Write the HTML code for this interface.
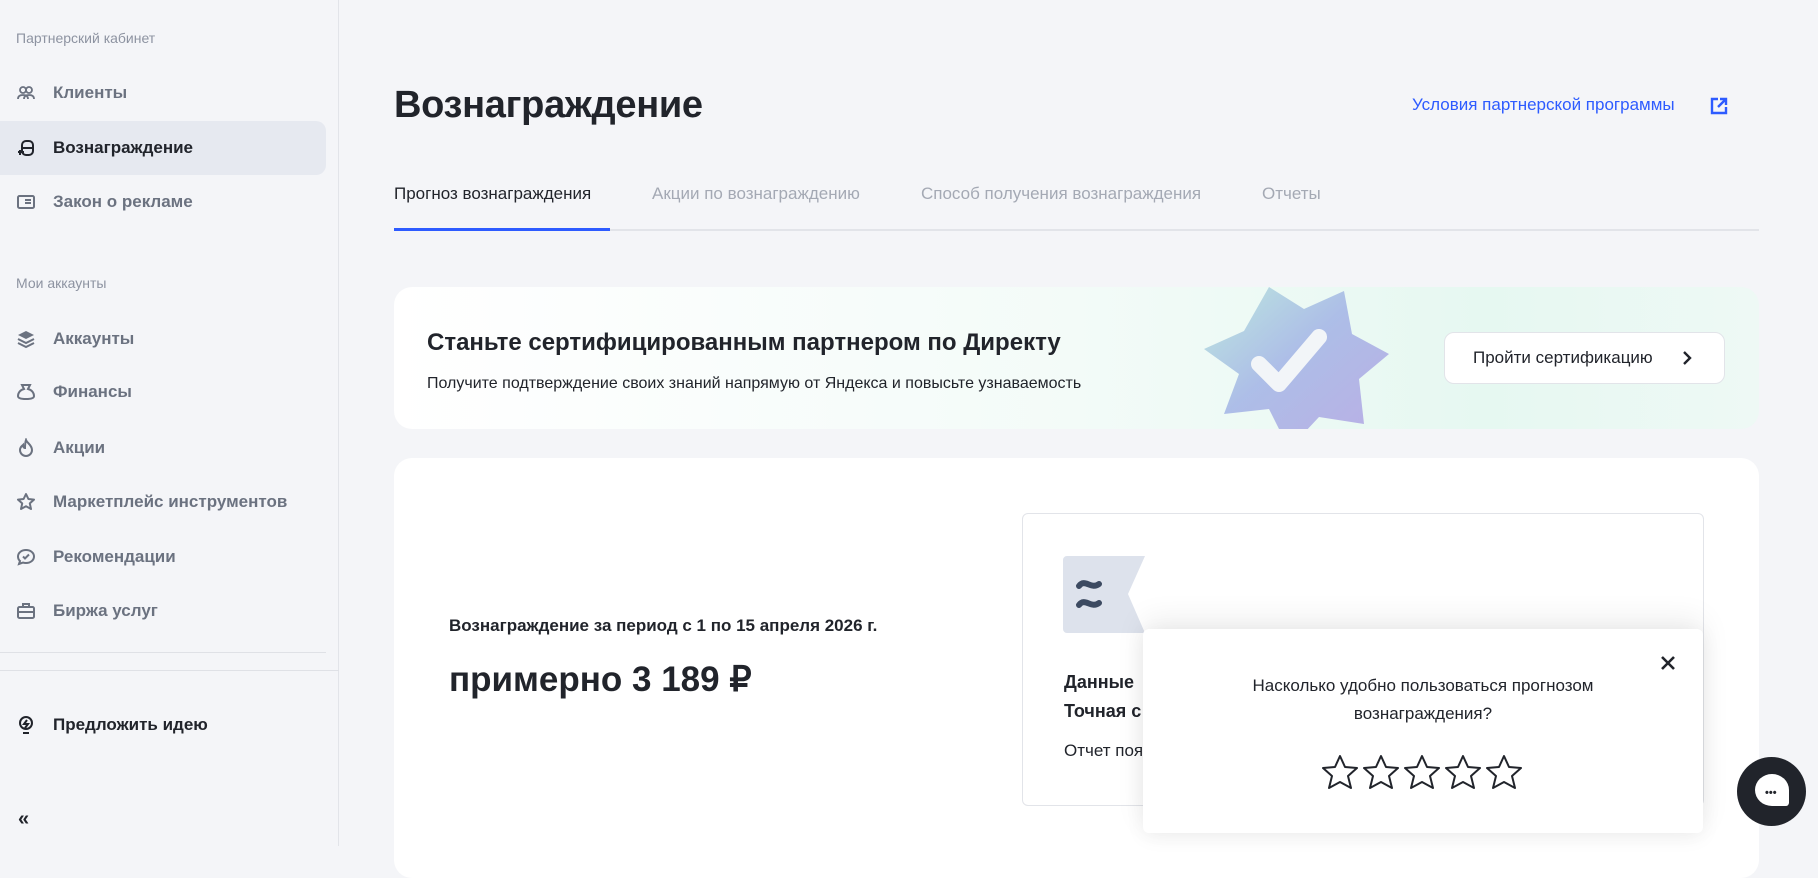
<!DOCTYPE html>
<html><head><meta charset="utf-8"><style>
*{box-sizing:border-box;margin:0;padding:0}
body{width:1818px;height:846px;overflow:hidden;background:#f4f5f8;font-family:"Liberation Sans","Noto Sans CJK SC",sans-serif;color:#21242b;position:relative}
.sb{position:absolute;left:0;top:0;width:339px;height:846px;border-right:1px solid #e2e4e9;background:#f4f5f8}
.sec{position:absolute;left:16px;font-size:14px;color:#8d93a1}
.it{position:absolute;left:0;width:326px;height:54px;display:flex;align-items:center;font-size:17px;font-weight:bold;color:#6b7280}
.it svg{position:absolute;left:16px;width:20px;height:20px}
.it span{position:absolute;left:53px}
.act{background:#e6e9f0;border-radius:0 10px 10px 0;color:#21242b}
.abs{position:absolute}
.tab{position:absolute;top:184px;font-size:17px;color:#a4a9b4}
</style></head><body>
<div class="sb">
<div class="sec" style="top:30px">Партнерский кабинет</div>
<div class="it" style="top:66px"><svg viewBox="0 0 20 20" fill="none" stroke="#6b7280" stroke-width="1.8"><circle cx="7" cy="7" r="3"/><circle cx="13" cy="7" r="3"/><path d="M2 16c0-3 2-4 5-4s5 1 5 4M8 16c0-3 2-4 5-4s5 1 5 4"/></svg><span>Клиенты</span></div>
<div class="it act" style="top:121px"><svg viewBox="0 0 20 20" fill="none" stroke="#21242b" stroke-width="2"><rect x="6" y="3" width="11" height="14" rx="4"/><path d="M6 10h11M2 14h6M4 12v5"/></svg><span>Вознаграждение</span></div>
<div class="it" style="top:175px"><svg viewBox="0 0 20 20" fill="none" stroke="#6b7280" stroke-width="2"><rect x="2" y="4" width="16" height="12" rx="1.5"/><path d="M9 8h6M9 11h6"/></svg><span>Закон о рекламе</span></div>
<div class="sec" style="top:275px">Мои аккаунты</div>
<div class="it" style="top:312px"><svg viewBox="0 0 20 20" fill="#6b7280"><path d="M10 2l8 4-8 4-8-4z"/><path d="M2 10l8 4 8-4" stroke="#6b7280" stroke-width="2" fill="none"/><path d="M2 14l8 4 8-4" stroke="#6b7280" stroke-width="2" fill="none"/></svg><span>Аккаунты</span></div>
<div class="it" style="top:365px"><svg viewBox="0 0 20 20" fill="none" stroke="#6b7280" stroke-width="2"><path d="M6 3h8l-2 4c4 1 6 4 6 7 0 2-2 3-8 3s-8-1-8-3c0-3 2-6 6-7z"/></svg><span>Финансы</span></div>
<div class="it" style="top:421px"><svg viewBox="0 0 20 20" fill="none" stroke="#6b7280" stroke-width="2"><path d="M10 2c1 3 6 5 6 10a6 6 0 0 1-12 0c0-3 2-4 3-5 0 2 1 3 2 3 0-3 0-5 1-8z"/></svg><span>Акции</span></div>
<div class="it" style="top:475px"><svg viewBox="0 0 20 20" fill="none" stroke="#6b7280" stroke-width="2" stroke-linejoin="round"><path d="M10 2l2.4 5 5.6.6-4.2 3.8 1.2 5.6L10 14.2 5 17l1.2-5.6L2 7.6 7.6 7z"/></svg><span>Маркетплейс инструментов</span></div>
<div class="it" style="top:530px"><svg viewBox="0 0 20 20" fill="none" stroke="#6b7280" stroke-width="2"><path d="M10 3c4.5 0 8 2.8 8 6.5S14.5 16 10 16c-1 0-2 0-3-.4L3 17l1-3C2.6 12.8 2 11.2 2 9.5 2 5.8 5.5 3 10 3z"/><path d="M7 9.5l2 2 4-4"/></svg><span>Рекомендации</span></div>
<div class="it" style="top:584px"><svg viewBox="0 0 20 20" fill="none" stroke="#6b7280" stroke-width="2"><rect x="2" y="6" width="16" height="11" rx="1.5"/><path d="M7 6V3h6v3M2 11h16"/></svg><span>Биржа услуг</span></div>
<div class="abs" style="left:0;top:652px;width:326px;height:1px;background:#dfe1e6"></div>
<div class="abs" style="left:0;top:670px;width:339px;height:1px;background:#dfe1e6"></div>
<div class="it" style="top:698px;color:#21242b"><svg viewBox="0 0 20 20" fill="none" stroke="#21242b" stroke-width="2"><circle cx="10" cy="8" r="6"/><path d="M11 5l-3 4h4l-3 4M7 18h6"/></svg><span>Предложить идею</span></div>
<div class="abs" style="left:18px;top:808px;font-size:20px;font-weight:bold;color:#21242b">«</div>
</div>

<div class="abs" style="left:394px;top:84px;font-size:38px;font-weight:bold;color:#21242b;letter-spacing:-0.3px">Вознаграждение</div>
<div class="abs" style="left:1412px;top:95px;font-size:17px;color:#2d5bff">Условия партнерской программы</div>
<svg class="abs" style="left:1710px;top:97px" width="18" height="18" viewBox="0 0 18 18" fill="none" stroke="#2d5bff" stroke-width="2.4"><path d="M8 2H2v14h14v-6"/><path d="M10 2h6v6M16 2L8 10"/></svg>

<div class="tab" style="left:394px;color:#21242b">Прогноз вознаграждения</div>
<div class="tab" style="left:652px">Акции по вознаграждению</div>
<div class="tab" style="left:921px">Способ получения вознаграждения</div>
<div class="tab" style="left:1262px">Отчеты</div>
<div class="abs" style="left:394px;top:229px;width:1365px;height:2px;background:#e2e4e9"></div>
<div class="abs" style="left:394px;top:228px;width:216px;height:3px;background:#2d5bff"></div>

<div class="abs" style="left:394px;top:287px;width:1365px;height:142px;border-radius:18px;background:linear-gradient(90deg,#ffffff 0%,#f3fbf8 50%,#e6f8f1 80%,#eef9f5 100%);overflow:hidden">
<div class="abs" style="left:33px;top:42px;font-size:24px;font-weight:bold;color:#21242b">Станьте сертифицированным партнером по Директу</div>
<div class="abs" style="left:33px;top:88px;font-size:16px;color:#21242b">Получите подтверждение своих знаний напрямую от Яндекса и повысьте узнаваемость</div>
<svg class="abs" style="left:800px;top:-8px" width="200" height="160" viewBox="0 0 200 160"><defs><linearGradient id="g" x1="0" y1="0" x2="1" y2="1"><stop offset="0" stop-color="#b7e6dc"/><stop offset=".45" stop-color="#a6b7e6"/><stop offset="1" stop-color="#b6a5e3"/></linearGradient></defs><path d="M75 8 L110 30 L150 12 L158 55 L195 75 L165 100 L170 145 L125 138 L95 170 L75 130 L30 135 L45 95 L10 70 L50 52 Z" fill="url(#g)" opacity=".9"/><path d="M65 85 L85 105 L125 58" fill="none" stroke="#f2f5f8" stroke-width="16" stroke-linecap="round" stroke-linejoin="round"/></svg>
<div class="abs" style="left:1050px;top:45px;width:281px;height:52px;background:#fff;border:1px solid #e2e4e9;border-radius:10px;font-size:17px;color:#21242b;padding:15px 0 0 28px">Пройти сертификацию<svg class="abs" style="left:237px;top:18px" width="10" height="14" viewBox="0 0 10 14" fill="none" stroke="#21242b" stroke-width="2.4"><path d="M2 1l6 6-6 6"/></svg></div>
</div>

<div class="abs" style="left:394px;top:458px;width:1365px;height:420px;border-radius:18px;background:#fff"></div>
<div class="abs" style="left:449px;top:616px;font-size:17px;font-weight:bold;color:#21242b">Вознаграждение за период с 1 по 15 апреля 2026 г.</div>
<div class="abs" style="left:449px;top:660px;font-size:35px;font-weight:bold;color:#21242b">примерно 3 189 ₽</div>

<div class="abs" style="left:1022px;top:513px;width:682px;height:293px;border:1px solid #e2e4e9;border-radius:6px;background:#fff"></div>
<svg class="abs" style="left:1063px;top:556px" width="83" height="77" viewBox="0 0 83 77"><path d="M4 0H82L65 38L82 77H4a4 4 0 0 1-4-4V4a4 4 0 0 1 4-4z" fill="#dde2ec"/><path d="M16 30c6-8 12 4 20-2M16 49c6-8 12 4 20-2" fill="none" stroke="#3c4a61" stroke-width="6" stroke-linecap="round"/></svg>
<div class="abs" style="left:1064px;top:668px;font-size:18px;font-weight:bold;color:#21242b;line-height:29px">Данные<br>Точная с</div>
<div class="abs" style="left:1064px;top:741px;font-size:17px;color:#21242b">Отчет поя</div>

<div class="abs" style="left:1143px;top:629px;width:560px;height:204px;background:#fff;border-radius:6px;box-shadow:0 -10px 30px rgba(0,0,0,.07),0 4px 20px rgba(0,0,0,.06)">
<div class="abs" style="left:0;top:43px;width:560px;text-align:center;font-size:17px;line-height:28px;color:#21242b">Насколько удобно пользоваться прогнозом<br>вознаграждения?</div>
<svg class="abs" style="left:517px;top:26px" width="16" height="16" viewBox="0 0 16 16" stroke="#21242b" stroke-width="2.6"><path d="M2 2l12 12M14 2L2 14"/></svg>
<svg class="abs" style="left:178px;top:125px" width="206" height="40" viewBox="0 0 206 40" fill="none" stroke="#21242b" stroke-width="2" stroke-linejoin="round"><g id="s"><path d="M19 2l5 11 12 1-9 8 3 12-11-6-11 6 3-12-9-8 12-1z"/></g><use href="#s" x="41"/><use href="#s" x="82"/><use href="#s" x="123"/><use href="#s" x="164"/></svg>
</div>

<div class="abs" style="left:1737px;top:757px;width:69px;height:69px;border-radius:50%;background:#21242b"></div>
<div class="abs" style="left:1755px;top:774px;width:34px;height:32px;border-radius:50% 50% 10% 50%;background:#fff"></div>
<div class="abs" style="left:1765px;top:790px;font-size:11px;font-weight:bold;letter-spacing:0px;color:#21242b;line-height:6px">•••</div>
</body></html>
